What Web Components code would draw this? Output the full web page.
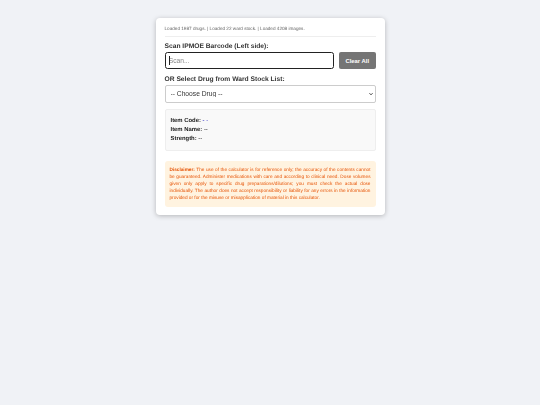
<!DOCTYPE html>
<html lang="en">
<head>
<meta charset="utf-8">
<title>Drug Calculator</title>
<style>
  html, body { margin: 0; height: 100%; }
  body {
    background: #f0f2f6;
    font-family: "Liberation Sans", Arial, sans-serif;
    text-rendering: geometricPrecision;
    color: #333;
    display: flex;
    justify-content: center;
    align-items: flex-start;
    padding-top: 17.7px;
    box-sizing: border-box;
  }
</style>
</head>
<body>
<app-card>
  <status-line>Loaded 1987 drugs. | Loaded 22 ward stock. | Loaded 4208 images.</status-line>
  <scan-field></scan-field>
  <drug-select></drug-select>
  <item-info></item-info>
  <disclaimer-box><b>Disclaimer:</b> The use of the calculator is for reference only; the accuracy of the contents cannot be guaranteed. Administer medications with care and according to clinical need. Dose volumes given only apply to specific drug preparations/dilutions; you must check the actual dose individually. The author does not accept responsibility or liability for any errors in the information provided or for the misuse or misapplication of material in this calculator.</disclaimer-box>
</app-card>

<script>
class AppCard extends HTMLElement {
  constructor() {
    super();
    this.attachShadow({mode: 'open'}).innerHTML = `
      <style>
        :host {
          display: flex;
          flex-direction: column;
          box-sizing: border-box;
          width: 229px;
          padding: 8.3px 9px 8px;
          background: #fff;
          border-radius: 4px;
          box-shadow: 0 1px 5px rgba(0,0,0,.25);
          filter: blur(.4px);
        }
      </style>
      <slot></slot>`;
  }
}

class StatusLine extends HTMLElement {
  constructor() {
    super();
    this.attachShadow({mode: 'open'}).innerHTML = `
      <style>
        :host {
          display: block;
          font-size: 4.65px;
          line-height: 6px;
          color: #666;
          padding-bottom: 4px;
          margin-bottom: 5px;
          border-bottom: .6px solid #eee;
        }
      </style>
      <slot></slot>`;
  }
}

class ScanField extends HTMLElement {
  constructor() {
    super();
    this.attachShadow({mode: 'open'}).innerHTML = `
      <style>
        :host { display: block; margin-bottom: 5.5px; }
        label { display: block; font-size: 6.7px; line-height: 9px; font-weight: bold; margin-bottom: 1.5px; color: #333; }
        .row { display: flex; gap: 4.6px; position: relative; }
        input {
          flex: 1;
          min-width: 0;
          box-sizing: border-box;
          height: 16.7px;
          margin: 0;
          padding: 0 3.2px;
          font: 6.7px "Liberation Sans", Arial, sans-serif;
          border: 1.2px solid #222;
          border-radius: 2.5px;
          background: #fff;
          outline: none;
        }
        input::placeholder { color: #888; }
        button {
          box-sizing: border-box;
          width: 36.5px;
          height: 16.7px;
          margin: 0;
          padding: 0;
          border: 0;
          border-radius: 2px;
          background: #757575;
          color: #fff;
          font: bold 5.9px "Liberation Sans", Arial, sans-serif;
        }
        .caret { position: absolute; left: 4.2px; top: 4px; width: .6px; height: 8.5px; background: #222; }
      </style>
      <label>Scan IPMOE Barcode (Left side):</label>
      <div class="row">
        <input type="text" placeholder="Scan...">
        <button>Clear All</button>
        <span class="caret"></span>
      </div>`;
  }
}

class DrugSelect extends HTMLElement {
  constructor() {
    super();
    this.attachShadow({mode: 'open'}).innerHTML = `
      <style>
        :host { display: block; position: relative; margin-bottom: 6.6px; }
        label { display: block; font-size: 6.7px; line-height: 9px; font-weight: bold; margin-bottom: 1.5px; color: #333; }
        select {
          display: block;
          appearance: none;
          box-sizing: border-box;
          width: 100%;
          height: 17.4px;
          margin: 0;
          padding: 0 5px;
          font: 6.7px "Liberation Sans", Arial, sans-serif;
          color: #333;
          background: #fff;
          border: 1px solid #ccc;
          border-radius: 2px;
        }
        svg { position: absolute; right: 2.3px; bottom: 6.7px; width: 4px; height: 4px; }
      </style>
      <label>OR Select Drug from Ward Stock List:</label>
      <select><option>-- Choose Drug --</option></select>
      <svg viewBox="0 0 8 8"><path d="M1 2.5 4 5.5 7 2.5" fill="none" stroke="#222" stroke-width="1.8"/></svg>`;
  }
}

class ItemInfo extends HTMLElement {
  constructor() {
    super();
    this.attachShadow({mode: 'open'}).innerHTML = `
      <style>
        :host {
          display: block;
          box-sizing: border-box;
          height: 41.4px;
          padding: 6.4px 5px;
          margin-bottom: 10.3px;
          background: #f9f9f9;
          border: .6px solid #eee;
          border-radius: 2px;
          font-size: 5.9px;
          line-height: 9.35px;
          color: #222;
        }
        .code { color: #55c; font-weight: bold; }
      </style>
      <div><b>Item Code:</b> <span class="code">- -</span></div>
      <div><b>Item Name:</b> --</div>
      <div><b>Strength:</b> --</div>`;
  }
}

class DisclaimerBox extends HTMLElement {
  constructor() {
    super();
    this.attachShadow({mode: 'open'}).innerHTML = `
      <style>
        :host {
          display: block;
          box-sizing: border-box;
          padding: 5.5px 5px;
          background: #fff3e0;
          border-radius: 3px;
          font-size: 4.72px;
          line-height: 7px;
          color: #e65100;
          text-align: justify;
        }
      </style>
      <slot></slot>`;
  }
}

customElements.define('app-card', AppCard);
customElements.define('status-line', StatusLine);
customElements.define('scan-field', ScanField);
customElements.define('drug-select', DrugSelect);
customElements.define('item-info', ItemInfo);
customElements.define('disclaimer-box', DisclaimerBox);
</script>
</body>
</html>
